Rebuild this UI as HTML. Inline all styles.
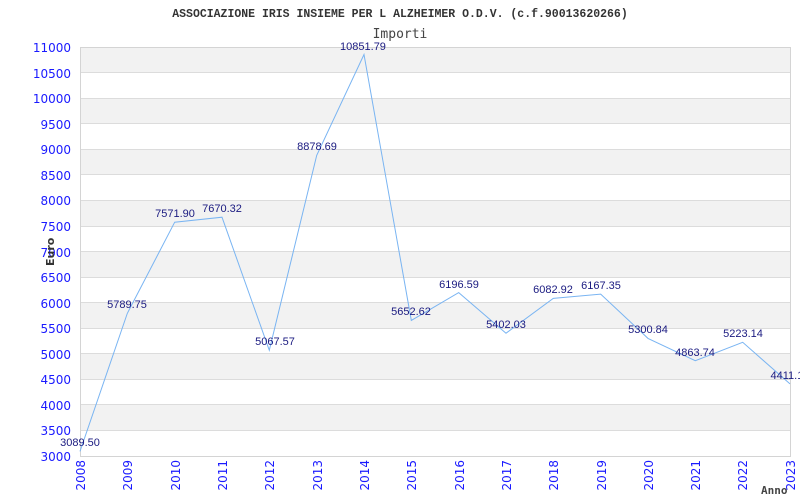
<!DOCTYPE html>
<html><head><style>body{margin:0;background:#fff}svg{display:block}</style></head><body>
<svg width="800" height="500" xmlns="http://www.w3.org/2000/svg">
<g fill="#f2f2f2">
<rect x="80" y="47" width="710" height="25.56"/>
<rect x="80" y="98.1" width="710" height="25.56"/>
<rect x="80" y="149.2" width="710" height="25.56"/>
<rect x="80" y="200.4" width="710" height="25.56"/>
<rect x="80" y="251.5" width="710" height="25.56"/>
<rect x="80" y="302.6" width="710" height="25.56"/>
<rect x="80" y="353.8" width="710" height="25.56"/>
<rect x="80" y="404.9" width="710" height="25.56"/>
</g>
<g stroke="#dcdcdc" stroke-width="1">
<line x1="80" x2="790" y1="72.5" y2="72.5"/><line x1="80" x2="790" y1="98.5" y2="98.5"/>
<line x1="80" x2="790" y1="123.5" y2="123.5"/><line x1="80" x2="790" y1="149.5" y2="149.5"/>
<line x1="80" x2="790" y1="174.5" y2="174.5"/><line x1="80" x2="790" y1="200.5" y2="200.5"/>
<line x1="80" x2="790" y1="226.5" y2="226.5"/><line x1="80" x2="790" y1="251.5" y2="251.5"/>
<line x1="80" x2="790" y1="277.5" y2="277.5"/><line x1="80" x2="790" y1="302.5" y2="302.5"/>
<line x1="80" x2="790" y1="328.5" y2="328.5"/><line x1="80" x2="790" y1="353.5" y2="353.5"/>
<line x1="80" x2="790" y1="379.5" y2="379.5"/><line x1="80" x2="790" y1="404.5" y2="404.5"/>
<line x1="80" x2="790" y1="430.5" y2="430.5"/>
</g>
<rect x="80.5" y="47.5" width="710" height="409" fill="none" stroke="#d4d4d4"/>
<text x="400" y="17" text-anchor="middle" font-family="Liberation Mono, monospace" font-weight="bold" font-size="11.5" fill="#333">ASSOCIAZIONE IRIS INSIEME PER L ALZHEIMER O.D.V. (c.f.90013620266)</text>
<text x="400" y="38" text-anchor="middle" font-family="DejaVu Sans Mono, monospace" font-size="13" fill="#444">Importi</text>
<g font-family="DejaVu Sans, sans-serif" font-size="12" fill="#1a1aff" text-anchor="end">
<text x="71" y="52">11000</text><text x="71" y="78">10500</text><text x="71" y="103">10000</text>
<text x="71" y="129">9500</text><text x="71" y="154">9000</text><text x="71" y="180">8500</text>
<text x="71" y="205">8000</text><text x="71" y="231">7500</text><text x="71" y="257">7000</text>
<text x="71" y="282">6500</text><text x="71" y="308">6000</text><text x="71" y="333">5500</text>
<text x="71" y="359">5000</text><text x="71" y="384">4500</text><text x="71" y="410">4000</text>
<text x="71" y="435">3500</text><text x="71" y="461">3000</text>
</g>
<g font-family="DejaVu Sans, sans-serif" font-size="12" fill="#1a1aff" text-anchor="end">
<text transform="translate(85,460) rotate(-90)">2008</text>
<text transform="translate(132,460) rotate(-90)">2009</text>
<text transform="translate(180,460) rotate(-90)">2010</text>
<text transform="translate(227,460) rotate(-90)">2011</text>
<text transform="translate(274,460) rotate(-90)">2012</text>
<text transform="translate(322,460) rotate(-90)">2013</text>
<text transform="translate(369,460) rotate(-90)">2014</text>
<text transform="translate(416,460) rotate(-90)">2015</text>
<text transform="translate(464,460) rotate(-90)">2016</text>
<text transform="translate(511,460) rotate(-90)">2017</text>
<text transform="translate(558,460) rotate(-90)">2018</text>
<text transform="translate(606,460) rotate(-90)">2019</text>
<text transform="translate(653,460) rotate(-90)">2020</text>
<text transform="translate(700,460) rotate(-90)">2021</text>
<text transform="translate(747,460) rotate(-90)">2022</text>
<text transform="translate(795,460) rotate(-90)">2023</text>
</g>
<text transform="translate(54,266) rotate(-90)" font-family="DejaVu Sans, sans-serif" font-weight="bold" font-size="11" fill="#333">Euro</text>
<text x="761" y="494" font-family="DejaVu Sans Mono, monospace" font-weight="bold" font-size="11" fill="#444">Anno</text>
<polyline fill="none" stroke="#79b4f2" stroke-width="1" points="80,451.4 127.3,313.4 174.7,222.2 222,217.2 269.3,350.3 316.7,155.4 364,54.5 411.3,320.4 458.7,292.6 506,333.2 553.3,298.4 600.7,294.1 648,338.4 695.3,360.7 742.7,342.3 790,383.9"/>
<g font-family="Liberation Sans, sans-serif" font-size="11" fill="#1a1a80" text-anchor="middle">
<text x="80" y="446">3089.50</text><text x="127" y="308">5789.75</text>
<text x="175" y="217">7571.90</text><text x="222" y="212">7670.32</text>
<text x="275" y="345">5067.57</text><text x="317" y="150">8878.69</text>
<text x="363" y="50">10851.79</text><text x="411" y="315">5652.62</text>
<text x="459" y="288">6196.59</text><text x="506" y="328">5402.03</text>
<text x="553" y="293">6082.92</text><text x="601" y="289">6167.35</text>
<text x="648" y="333">5300.84</text><text x="695" y="356">4863.74</text>
<text x="743" y="337">5223.14</text><text x="790" y="379">4411.15</text>
</g>
</svg>
</body></html>
